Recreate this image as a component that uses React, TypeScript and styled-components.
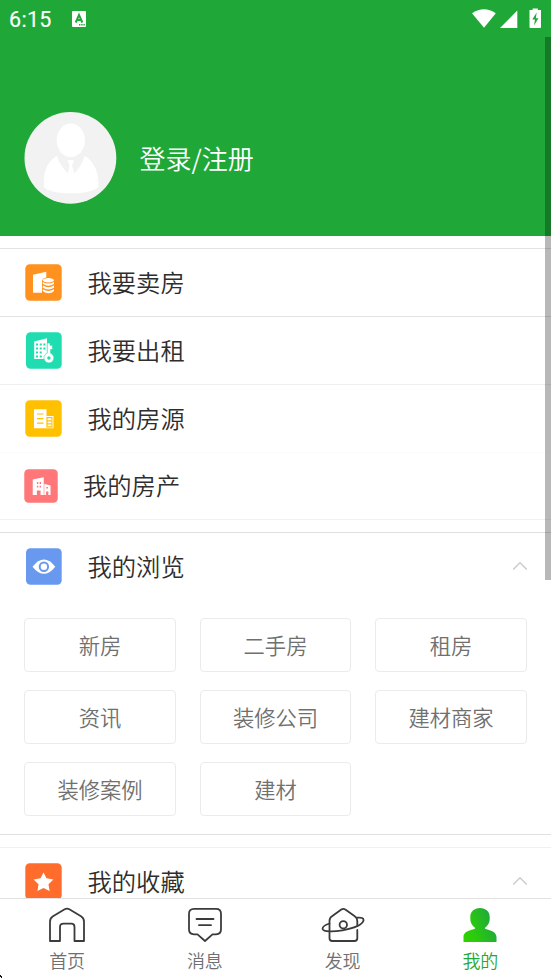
import React from "react";
import styled, { createGlobalStyle } from "styled-components";

const GlobalStyle = createGlobalStyle`
  * { box-sizing: border-box; }
  body { margin: 0; background: #fff; overflow: hidden; }
`;

const Screen = styled.div`
  position: relative;
  display: flex;
  flex-direction: column;
  width: 551px;
  height: 979px;
  overflow: hidden;
  background: #fff;
  color: #2e2e2e;
  font-family: "Noto Sans CJK SC", sans-serif;
  font-weight: 350;
  svg { display: block; flex: none; }
`;

const Header = styled.header`
  flex: none;
  height: 235.67px;
  background: #1fa838;
  color: #fff;
`;

const StatusBar = styled.div`
  display: flex;
  align-items: center;
  height: 37px;
  padding: 0 9px;
`;

const Clock = styled.span`
  width: 63px;
  font: 400 21.5px/37px Roboto, sans-serif;
  letter-spacing: 0.3px;
  padding-top: 2px;
  -webkit-text-stroke: 0.15px #fff;
`;

const StatusIcons = styled.div`
  margin-left: auto;
`;

const Profile = styled.div`
  display: flex;
  align-items: center;
  gap: 22.5px;
  height: 92px;
  margin: 75px 0 0 24px;
`;

const LoginText = styled.span`
  font-size: 26px;
  line-height: 38px;
`;

const Content = styled.main`
  flex: 1;
  min-height: 0;
  overflow: hidden;
`;

const Gap = styled.div<{ $height: number; $top?: string; $bottom?: string }>`
  height: ${(p) => p.$height}px;
  border-top: ${(p) => (p.$top ? `1px solid ${p.$top}` : "0")};
  border-bottom: ${(p) => (p.$bottom ? `1px solid ${p.$bottom}` : "0")};
`;

const Row = styled.div<{ $height?: number; $line?: string; $left?: number }>`
  display: flex;
  align-items: center;
  gap: 25.5px;
  height: ${(p) => p.$height ?? 68}px;
  padding: 0 23px 0 ${(p) => p.$left ?? 25}px;
  border-bottom: ${(p) => (p.$line ? `1px solid ${p.$line}` : "0")};
`;

const SectionRow = styled(Row)`
  padding-bottom: 1px;
`;

const RowLabel = styled.span`
  font-size: 24.3px;
  line-height: 36px;
  flex: 1;
`;

const CompactRow = styled(Row)`
  gap: 25px;
  ${RowLabel} { padding-bottom: 1px; }
`;

const Grid = styled.div`
  display: grid;
  grid-template-columns: 152px 151px 152px;
  grid-auto-rows: 54px;
  gap: 18px 24px;
  padding: 17px 24px 18px;
`;

const Chip = styled.div`
  display: flex;
  align-items: center;
  justify-content: center;
  border: 1px solid #ebebeb;
  border-radius: 4px;
  color: #707070;
  font-size: 21.3px;
  line-height: 30px;
`;

const TabBar = styled.nav`
  flex: none;
  display: grid;
  grid-template-columns: repeat(4, 137.75px);
  height: 81px;
  border-top: 1px solid #e2e2e2;
  background: #fff;
`;

const Tab = styled.div<{ $active?: boolean }>`
  display: flex;
  flex-direction: column;
  align-items: center;
  margin-left: -3.5px;
  padding-top: 7px;
  color: ${(p) => (p.$active ? "#1fa838" : "#707070")};
`;

const TabLabel = styled.span`
  margin-top: 3px;
  font-size: 18px;
  line-height: 26px;
`;

const ScrollThumb = styled.div`
  position: absolute;
  top: 37px;
  right: 0;
  width: 6px;
  height: 543px;
  background: rgba(0, 0, 0, 0.28);
`;

const CornerMark = styled.svg`
  position: absolute;
  left: 0;
  bottom: 0;
`;

const KeyboardIcon = () => (
  <svg width="14" height="16" viewBox="0 0 14 16">
    <path d="M1 0H13Q14 0 14 1V15Q14 16 13 16H1Q0 16 0 15V1Q0 0 1 0Z" fill="#fff" />
    <path d="M3.7 11.5L7 3.9L10.3 11.5M5 9H9" fill="none" stroke="#1fa838" strokeWidth="2" />
    <path d="M7 13.7H13" stroke="#1fa838" strokeWidth="1.4" strokeDasharray="1.4 .8" />
  </svg>
);

const SystemIcons = () => (
  <svg width="70" height="22" viewBox="472 7.5 70 22">
    <path d="M472 12.7Q484 5 495.8 12.7L484 27.2Z" fill="#fff" />
    <path d="M500 27.5L517.3 10V27.5Z" fill="#fff" />
    <path d="M532.6 8H537.8V9.5H541V26.8Q541 27.5 540 27.5H530.4Q529.5 27.5 529.5 26.7V9.5H532.6Z" fill="#fff" />
    <path d="M536.7 12L532.3 19H535L534 25L538.4 17.8H535.8Z" fill="#1fa838" />
  </svg>
);

const Avatar = () => (
  <svg width="93" height="93" viewBox="-0.4 0.1 93 93">
    <circle cx="46" cy="46" r="45.9" fill="#f2f2f2" />
    <ellipse cx="46.4" cy="28.4" rx="14.1" ry="16.8" fill="#fff" />
    <path d="M32.5 44C34 50 39 57 43.5 61.5L45.2 53L43.3 49.6Q43 48 44.5 48H48Q50 48 49.3 50L47.6 53L50 61.5C55 56 58.5 50 60.2 44C68 48 73 57 74 68V75C70 79 59 81.4 46.5 81.4C34 81.4 23 79 19.5 75V68C20 56 25 48 32.5 44Z" fill="#fff" />
  </svg>
);

const Tile = ({ color, size = 37, inset = 0.3, children }: { color: string; size?: number; inset?: number; children: React.ReactNode }) => (
  <svg width={size} height={size} viewBox="0 0 37 37">
    <rect x={inset} y="0.3" width={36.7 - inset} height="36.4" rx="4.5" fill={color} />
    {children}
  </svg>
);

const SellIcon = () => (
  <Tile color="#ff911f">
    <path d="M8 10.8L21.3 7.8V13.5Q17 14.5 17 17V28.7H8Z" fill="#fff" />
    <g fill="#fff">
      <ellipse cx="23.4" cy="16.2" rx="5.6" ry="2.2" />
      <path d="M17.8 18Q23.4 21.2 29 18V20.1Q23.4 23.6 17.8 20.1ZM17.8 21.6Q23.4 25 29 21.6V23.8Q23.4 27 17.8 23.8ZM17.8 25.3Q23.4 28.6 29 25.3V27Q26.8 29.3 23.4 29.3T17.8 27Z" />
    </g>
  </Tile>
);

const RentIcon = () => (
  <Tile color="#1fddb0" inset={1}>
    <path d="M9.2 9.5L22 6.3V27H9.2Z" fill="#fff" />
    <path d="M11 11.5h2v2h-2zM14.7 11.5h2v2h-2zM18.4 11.5h2v2h-2zM11 15.5h2v2h-2zM14.7 15.5h2v2h-2zM18.4 15.5h2v2h-2zM11 19.5h2v2h-2zM14.7 19.5h2v2h-2zM11 23.5h2v2h-2zM14.7 23.5h2v2h-2z" fill="#1fddb0" />
    <path d="M22.2 11H25V13.3H27.4V17.5H25.6V21.2A5 5 0 1 1 22.2 21.2Z" fill="#fff" stroke="#1fddb0" strokeWidth=".6" />
    <circle cx="23.9" cy="26" r="1.7" fill="#1fddb0" />
  </Tile>
);

const ListingIcon = () => (
  <Tile color="#ffc000">
    <path d="M9 9.3H21.5V16H28.5V28.3H9Z" fill="#fff" />
    <path d="M12 14H18.5M12 18.6H18.5M12 23.2H18.5M22 17.7V26.8H26.9V17.7ZM22.5 20.8H26M22.5 23.8H26" fill="none" stroke="#ffc000" strokeWidth="1.2" />
  </Tile>
);

const EstateIcon = () => (
  <Tile color="#ff7779" size={34}>
    <path d="M9.5 11.5L21.5 9V16L28.9 18V28.3H26.5V24.5H24V28.3H21.5V16V28.3H18V23.5H14V28.3H9.5Z" fill="#fff" />
    <path d="M14 14.2h1.5v2H14zM17 14.2h1.5v2H17zM14 18.2h1.5v2H14zM17 18.2h1.5v2H17zM24.3 19.5h1.8v1.6h-1.8z" fill="#ff7779" />
    <path d="M21.8 16V28.3" stroke="#ff7779" strokeWidth=".6" />
  </Tile>
);

const BrowseIcon = () => (
  <Tile color="#6899ef" inset={1}>
    <path d="M7.5 18.7Q18.9 4.5 30.3 18.7Q18.9 33 7.5 18.7Z" fill="#fff" />
    <circle cx="18.9" cy="18.7" r="4.2" fill="none" stroke="#6899ef" strokeWidth="2" />
  </Tile>
);

const FavoriteIcon = () => (
  <Tile color="#ff6c2c">
    <path d="M18.5 9.4L21.5 15.3L28.4 16.5L23.5 21.2L24.6 28L18.5 25L12.4 28L13.5 21.2L8.6 16.5L15.5 15.3Z" fill="#fff" />
  </Tile>
);

const Chevron = () => (
  <svg width="16" height="10" viewBox="0 0 16 10">
    <path d="M1.2 8.5L8 1.8L14.8 8.5" fill="none" stroke="#ccc" strokeWidth="1.5" />
  </svg>
);

const HomeIcon = () => (
  <svg width="38" height="38" viewBox="0 0 38 38" fill="none" stroke="#3b3b3b" strokeWidth="1.8" strokeLinejoin="round">
    <path d="M2 35V15.5Q2 12 5 10.2L16.7 3.3Q19 2 21.3 3.3L33 10.2Q36 12 36 15.5V35H26.5V21Q26.5 17.7 23.2 17.7H15.7Q12 17.7 12 21V35Z" />
  </svg>
);

const MessageIcon = () => (
  <svg width="38" height="38" viewBox="0 0 38 38" fill="none" stroke="#3b3b3b" strokeWidth="1.8" strokeLinejoin="round" strokeLinecap="round">
    <path d="M8 2.8H30Q35 2.8 35 7.8V23.3Q35 28.3 30 28.3H26.5L19 35L11.5 28.3H8Q3 28.3 3 23.3V7.8Q3 2.8 8 2.8ZM10.5 13H27.5M13 19.2H25" />
  </svg>
);

const DiscoverIcon = () => (
  <svg width="44" height="38" viewBox="0 0 44 38" fill="none" stroke="#3b3b3b" strokeWidth="1.8" strokeLinejoin="round" strokeLinecap="round">
    <path d="M8.5 26V15Q8.5 11.8 11 10.3L20.3 3.5Q22.3 2.2 24.3 3.5L33.8 10.3Q36.3 12 36.3 15V20M8.5 26V32.3Q8.5 35 11.2 35H33.5Q36.3 35 36.3 32.3V24" />
    <path d="M8.5 17.5C3 19.2 1.2 21 1.7 23.2C3.5 28.5 39 23.5 42.4 14.9C43.1 12 40.5 11.2 35.8 11.7" />
    <circle cx="22.3" cy="18.8" r="3.7" />
  </svg>
);

const MineIcon = () => (
  <svg width="34" height="38" viewBox="0 0 34 38">
    <defs>
      <linearGradient id="mine" x1="0" y1="1" x2="1" y2=".6">
        <stop offset="0" stopColor="#2fd200" />
        <stop offset=".35" stopColor="#2bcb0b" />
        <stop offset="1" stopColor="#1fa93c" />
      </linearGradient>
    </defs>
    <path d="M17 2C22.8 2 26.7 5.5 26.7 11V13C26.7 16.2 25.2 19.8 21.8 22C21.6 24 33.5 23.8 33.5 31V36H.5V31C.5 23.8 12.4 24 12.2 22C8.8 19.8 7.3 16.2 7.3 13V11C7.3 5.5 11.2 2 17 2Z" fill="url(#mine)" />
  </svg>
);

const links = [
  { label: "我要卖房", icon: <SellIcon />, line: "#e3e3e3" },
  { label: "我要出租", icon: <RentIcon />, line: "#efefef" },
  { label: "我的房源", icon: <ListingIcon />, line: "#fcfcfc" },
];

const categories = ["新房", "二手房", "租房", "资讯", "装修公司", "建材商家", "装修案例", "建材"];

const tabs = [
  { label: "首页", icon: <HomeIcon /> },
  { label: "消息", icon: <MessageIcon /> },
  { label: "发现", icon: <DiscoverIcon /> },
  { label: "我的", icon: <MineIcon />, active: true },
];

export default function App() {
  return (
    <Screen>
      <GlobalStyle />
      <Header>
        <StatusBar>
          <Clock>6:15</Clock>
          <KeyboardIcon />
          <StatusIcons><SystemIcons /></StatusIcons>
        </StatusBar>
        <Profile>
          <Avatar />
          <LoginText>登录/注册</LoginText>
        </Profile>
      </Header>
      <Content>
        <Gap $height={13.33} $bottom="#e3e3e3" />
        {links.map((item) => (
          <Row key={item.label} $line={item.line}>
            {item.icon}
            <RowLabel>{item.label}</RowLabel>
          </Row>
        ))}
        <CompactRow $height={67} $left={24} $line="#f1f1f1">
          <EstateIcon />
          <RowLabel>我的房产</RowLabel>
        </CompactRow>
        <Gap $height={13} $bottom="#e0e0e0" />
        <SectionRow>
          <BrowseIcon />
          <RowLabel>我的浏览</RowLabel>
          <Chevron />
        </SectionRow>
        <Grid>
          {categories.map((name) => <Chip key={name}>{name}</Chip>)}
        </Grid>
        <Gap $height={14} $top="#e0e0e0" $bottom="#f0f0f0" />
        <SectionRow>
          <FavoriteIcon />
          <RowLabel>我的收藏</RowLabel>
          <Chevron />
        </SectionRow>
      </Content>
      <TabBar>
        {tabs.map((tab) => (
          <Tab key={tab.label} $active={tab.active}>
            {tab.icon}
            <TabLabel>{tab.label}</TabLabel>
          </Tab>
        ))}
      </TabBar>
      <ScrollThumb />
      <CornerMark width="3" height="5" viewBox="0 0 3 5">
        <path d="M0 1H1V3H0ZM1 2H2V4H1Z" fill="#111" />
      </CornerMark>
    </Screen>
  );
}
